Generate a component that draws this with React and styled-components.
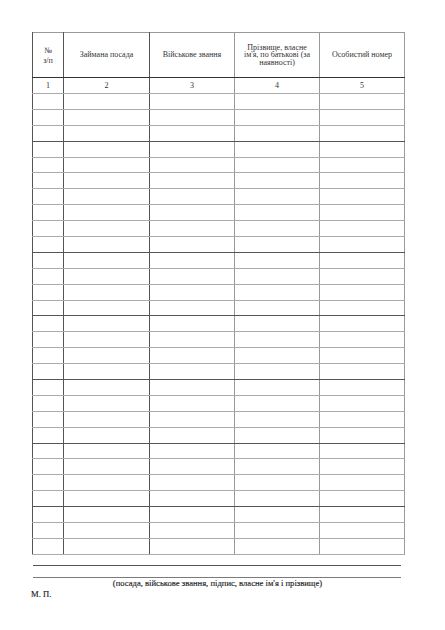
import React from 'react'
import styled, { createGlobalStyle } from 'styled-components'

const GlobalStyle = createGlobalStyle`
  html, body {
    margin: 0;
    padding: 0;
    background: #fff;
  }
  body {
    font-family: "Liberation Serif", "Times New Roman", serif;
    color: #222;
  }
`;

const Page = styled.div`
  width: 445px;
  height: 630px;
  box-sizing: border-box;
  padding: 32px 41px 0 32px;
  background: #fff;
`;

const Table = styled.table`
  width: 372px;
  border-collapse: collapse;
  table-layout: fixed;
  border: 1px solid #9a9a9a;
  font-family: "Liberation Serif", "Times New Roman", serif;
`;

const HeadCell = styled.th`
  height: 44px;
  padding: 0 2px;
  font-weight: normal;
  font-size: 8px;
  line-height: 7.6px;
  text-align: center;
  vertical-align: middle;
  color: #333;
  border-left: 1px solid ${p => (p.$strong ? '#555' : '#999')};
  border-right: 1px solid ${p => (p.$strong ? '#555' : '#999')};
  border-bottom: 1px solid #333;
`;

const NumLine = styled.span`
  display: block;
  line-height: ${p => p.$tall ? '12px' : '7.6px'};
`;

const Cell = styled.td`
  padding: 0;
  font-size: 8px;
  text-align: center;
  color: #333;
  border-left: 1px solid ${p => (p.$strong ? '#555' : '#999')};
  border-right: 1px solid ${p => (p.$strong ? '#555' : '#999')};
  border-bottom: 1px solid ${p => (p.$dark ? '#555' : '#ababab')};
`;

const NumRow = styled.tr`
  height: 16px;
`;

const Row = styled.tr`
  height: 15.9px;
`;

const Footer = styled.div`
  width: 368px;
  margin: 10px 0 0 1px;
`;

const Rule = styled.div`
  height: 0;
  border-top: ${p => p.$thick ? '1.5px solid #7a7a7a' : '1px solid #555'};
  margin-bottom: ${p => p.$gap || 0}px;
`;

const Caption = styled.div`
  text-align: center;
  font-size: 8.6px;
  line-height: 11px;
  padding-left: 1px;
  color: #222;
  -webkit-text-stroke: 0.15px #222;
`;

const Stamp = styled.div`
  font-size: 8.6px;
  line-height: 11px;
  margin: 0 0 0 -1px;
  color: #222;
  -webkit-text-stroke: 0.15px #222;
`;

const widths = [31, 86, 85, 85, 85];
const darkRows = [3, 10, 14, 18, 22, 26];
const rows = Array.from({ length: 29 }, (_, i) => i + 1);

export default function App() {
  return (
    <Page>
      <GlobalStyle />
      <Table>
        <colgroup>
          {widths.map((w, i) => <col key={i} style={{ width: w }} />)}
        </colgroup>
        <thead>
          <tr>
            <HeadCell $strong>
              <NumLine $tall>№</NumLine>
              <NumLine>з/п</NumLine>
            </HeadCell>
            <HeadCell $strong>Займана посада</HeadCell>
            <HeadCell>Військове звання</HeadCell>
            <HeadCell>Прізвище, власне<br />ім'я, по батькові (за<br />наявності)</HeadCell>
            <HeadCell>Особистий номер</HeadCell>
          </tr>
        </thead>
        <tbody>
          <NumRow>
            {[1, 2, 3, 4, 5].map(n => (
              <Cell key={n} $strong={n <= 2}>{n}</Cell>
            ))}
          </NumRow>
          {rows.map(r => (
            <Row key={r}>
              {widths.map((_, c) => (
                <Cell key={c} $strong={c <= 1} $dark={darkRows.includes(r)} />
              ))}
            </Row>
          ))}
        </tbody>
      </Table>
      <Footer>
        <Rule $gap={11} />
        <Rule $thick />
        <Caption>(посада, військове звання, підпис, власне ім'я і прізвище)</Caption>
      </Footer>
      <Stamp>М. П.</Stamp>
    </Page>
  );
}
